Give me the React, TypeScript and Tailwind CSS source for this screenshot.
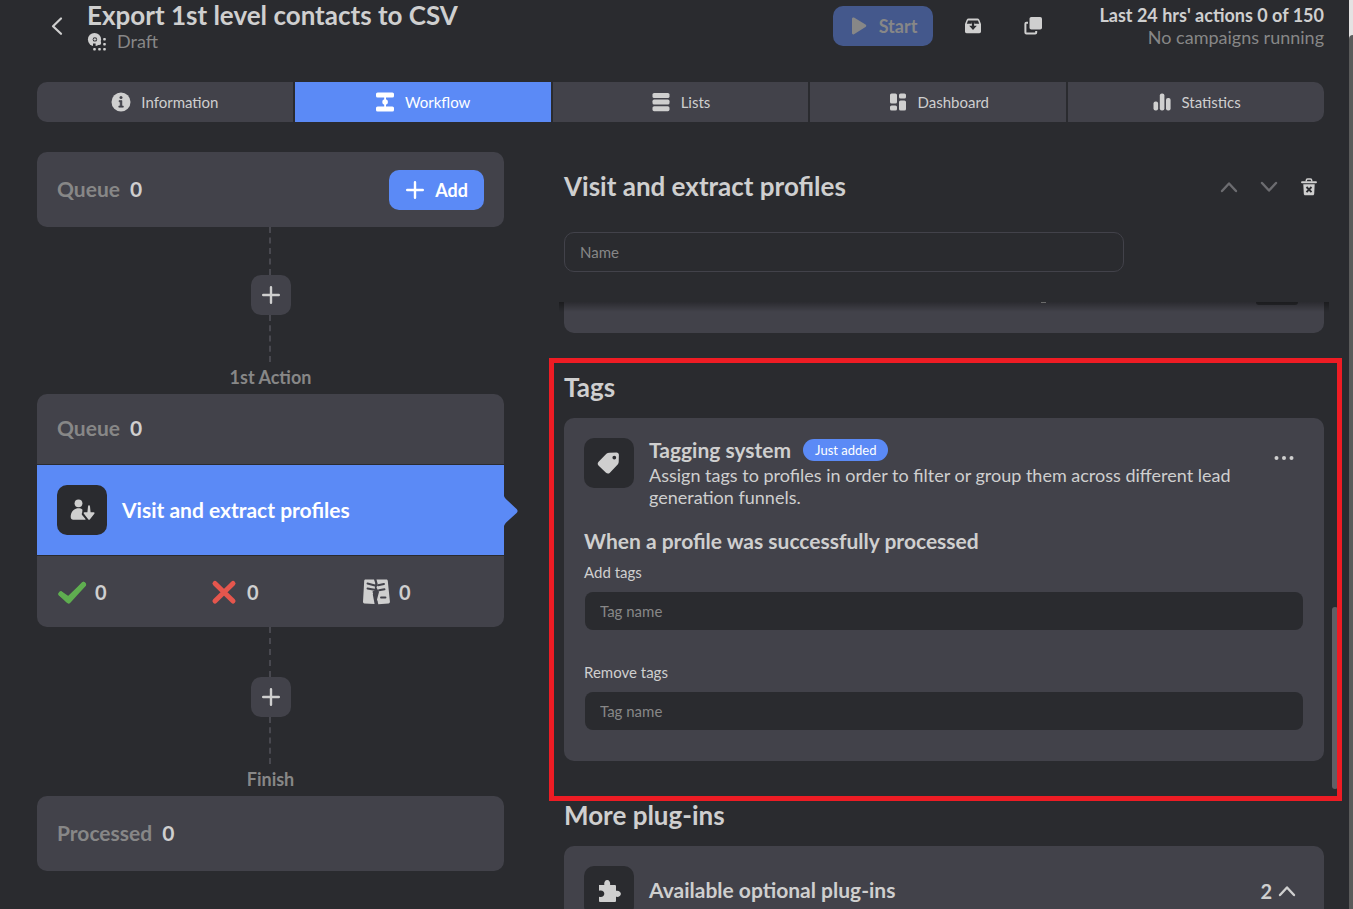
import React from 'react';

interface TabItem {
  label: string;
  icon: React.ReactNode;
  active?: boolean;
}

const tabs: TabItem[] = [
  {
    label: 'Information',
    icon: (
      <svg viewBox="0 0 20 20" className="w-5 h-5" fill="none">
        <circle cx="10" cy="10" r="9.5" fill="currentColor" />
        <circle cx="10" cy="5.6" r="1.5" fill="#42424a" />
        <path d="M8 8.6h2.900v5.400h1.400v1.200H7.800V14h1.400V9.800H8z" fill="#42424a" stroke="#42424a" strokeWidth="0.600" />
      </svg>
    ),
  },
  {
    label: 'Workflow',
    active: true,
    icon: (
      <svg viewBox="0 0 20 20" className="w-5 h-5" fill="currentColor">
        <rect x="1" y="0.5" width="18" height="5" rx="1.6" />
        <rect x="1" y="14.5" width="18" height="5" rx="1.6" />
        <rect x="9.2" y="4" width="1.8" height="12" />
        <circle cx="10.1" cy="10" r="2.8" />
      </svg>
    ),
  },
  {
    label: 'Lists',
    icon: (
      <svg viewBox="0 0 20 20" className="w-5 h-5" fill="currentColor">
        <rect x="1.5" y="1" width="17" height="5" rx="1.6" />
        <rect x="1.5" y="7.6" width="17" height="5" rx="1.6" />
        <rect x="1.5" y="14.2" width="17" height="5" rx="1.6" />
      </svg>
    ),
  },
  {
    label: 'Dashboard',
    icon: (
      <svg viewBox="0 0 20 20" className="w-5 h-5" fill="currentColor">
        <rect x="2" y="1.5" width="7" height="10" rx="1.6" />
        <rect x="2" y="13.5" width="7" height="5" rx="1.6" />
        <rect x="11" y="1.5" width="7" height="5" rx="1.6" />
        <rect x="11" y="8.5" width="7" height="10" rx="1.6" />
      </svg>
    ),
  },
  {
    label: 'Statistics',
    icon: (
      <svg viewBox="0 0 20 20" className="w-5 h-5" fill="currentColor">
        <rect x="1.5" y="9.5" width="4.6" height="9" rx="2" />
        <rect x="7.8" y="1.5" width="4.6" height="17" rx="2" />
        <rect x="14" y="6" width="4.6" height="12.5" rx="2" />
      </svg>
    ),
  },
];

const PlusIcon = () => (
  <svg viewBox="0 0 20 20" className="w-5 h-5" fill="none" stroke="currentColor" strokeWidth="2.4" strokeLinecap="round">
    <path d="M10 2.2v15.6M2.2 10h15.6" />
  </svg>
);

const ChevronIcon = ({ down = false }: { down?: boolean }) => (
  <svg viewBox="0 0 20 20" className="w-5 h-5" fill="none" stroke="currentColor" strokeWidth="2.4" strokeLinecap="round" strokeLinejoin="round">
    <path d={down ? 'M3 6l7 7.5L17 6' : 'M3 14l7-7.5L17 14'} />
  </svg>
);

const IconTile = ({ children }: { children: React.ReactNode }) => (
  <div className="flex-shrink-0 w-[50px] h-[50px] rounded-[10px] bg-[#2a2b2f] text-[#cfcfcf] flex items-center justify-center">
    {children}
  </div>
);

const AddStep = ({ next, tall = false }: { next: string; tall?: boolean }) => (
  <div className="flex flex-col items-center">
    <div className={`mr-px w-0 border-l-2 border-dashed border-[#48484f] ${tall ? 'h-[50px]' : 'h-12'}`} />
    <button
      type="button"
      aria-label="Add action"
      className="w-10 h-10 rounded-[10px] bg-[#42424a] text-[#cfcfcf] flex items-center justify-center"
    >
      <PlusIcon />
    </button>
    <div className="mr-px w-0 h-[47px] border-l-2 border-dashed border-[#48484f]" />
    <div className="h-8 text-lg leading-[30px] font-bold text-[#878787]">{next}</div>
  </div>
);

const Counter = ({ label, value }: { label: string; value: number }) => (
  <div className="flex gap-[10px] pb-[2px] text-[21px] leading-[30px] font-bold">
    <span className="text-[#878787]">{label}</span>
    <span className="text-[#cfcfcf]">{value}</span>
  </div>
);

const Header = () => (
  <header className="h-[82px]">
    <div className="h-[52px] flex items-center">
      <button type="button" aria-label="Back" className="w-10 h-10 flex items-center justify-center">
        <svg viewBox="0 0 20 20" className="w-5 h-5" fill="none" stroke="currentColor" strokeWidth="2.2" strokeLinecap="round" strokeLinejoin="round">
          <path d="M14 2.5L6 10.2l8 7.6" />
        </svg>
      </button>
      <div className="flex-1 ml-[10px]">
        <h1 className="text-[26px] leading-[31px] font-bold">Export 1st level contacts to CSV</h1>
        <div className="flex items-center gap-[10px] text-lg leading-[21px] text-[#878787]">
          <svg viewBox="0 0 20 20" className="w-5 h-5" fill="#cfcfcf">
            <circle cx="7.500" cy="7.500" r="6.600" />
            <circle cx="7.900" cy="7.400" r="2.200" fill="#2a2b2f" />
            <path d="M7.900 5.900v3M6.400 7.400h3" stroke="#cfcfcf" strokeWidth="1" />
            <path d="M6 11.500h2.600v3H6z" fill="#2a2b2f" />
            <circle cx="12.200" cy="11" r="2" />
            <rect x="16.200" y="6" width="2.600" height="2.600" rx="0.800" />
            <rect x="16.200" y="11" width="2.600" height="2.600" rx="0.800" />
            <rect x="16.200" y="16" width="2.600" height="2.600" rx="0.800" />
            <rect x="11.200" y="16" width="2.600" height="2.600" rx="0.800" />
            <rect x="6.200" y="16" width="2.600" height="2.600" rx="0.800" />
          </svg>
          <span>Draft</span>
        </div>
      </div>
      <button
        type="button"
        className="w-[100px] h-10 rounded-[10px] bg-[#44588c] text-[#878787] text-lg font-bold flex items-center justify-center gap-[10px]"
      >
        <svg viewBox="0 0 20 20" className="w-5 h-5" fill="currentColor">
          <path d="M3 2.800c0-1.100 1-1.700 2-1.200l11.500 6.900c1 .6 1 2 0 2.600L5 18.200c-1 .5-2-.1-2-1.200z" />
        </svg>
        Start
      </button>
      <button type="button" aria-label="Archive" className="ml-5 w-10 h-10 flex items-center justify-center">
        <svg viewBox="0 0 20 20" className="w-5 h-5" fill="currentColor">
          <path
            fillRule="evenodd"
            d="M5.600 2.500h8.800c.8 0 1.500.4 1.900 1.200L18 8v7.500c0 1-.7 1.700-1.700 1.700H3.700c-1 0-1.700-.7-1.700-1.700V8l1.700-4.300c.4-.8 1.100-1.200 1.900-1.200zM5 4.500L3.800 7.800h4.900V6.500h2.600v1.300h4.900L15 4.500z"
          />
          <path d="M8.900 5.500h2.200v4.300h2.700L10 14 6.200 9.800h2.700z" fill="#2a2b2f" />
        </svg>
      </button>
      <button type="button" aria-label="Duplicate" className="ml-5 w-10 h-10 flex items-center justify-center">
        <svg viewBox="0 0 20 20" className="w-5 h-5" fill="none">
          <rect x="6.500" y="1" width="12.500" height="12.500" rx="1.800" fill="currentColor" />
          <path d="M5 6.800H3.400c-.6 0-1 .4-1 1v8.800c0 .6.4 1 1 1h8.800c.6 0 1-.4 1-1V15" stroke="currentColor" strokeWidth="2" />
        </svg>
      </button>
      <div className="ml-10 min-w-[231px] text-right text-lg leading-[22px]">
        <div className="font-bold">Last 24 hrs' actions 0 of 150</div>
        <div className="text-[#878787]">No campaigns running</div>
      </div>
    </div>
  </header>
);

const TabBar = () => (
  <nav className="flex gap-[2px] rounded-[10px] overflow-hidden">
    {tabs.map((tab) => (
      <button
        key={tab.label}
        type="button"
        className={`flex-1 basis-0 h-10 flex items-center justify-center gap-[10px] text-[15px] ${
          tab.active ? 'bg-[#5b8af6] text-white' : 'bg-[#42424a] text-[#cfcfcf]'
        }`}
      >
        {tab.icon}
        {tab.label}
      </button>
    ))}
  </nav>
);

const results = [
  {
    name: 'Successful',
    icon: (
      <svg viewBox="0 0 30 30" className="w-[30px] h-[30px]" fill="none" stroke="#5fae50" strokeWidth="5" strokeLinecap="round" strokeLinejoin="round">
        <path d="M4 17l7.500 7L26.500 7.500" />
        <path d="M4 17l7.500 5L26.500 7.500" />
      </svg>
    ),
  },
  {
    name: 'Failed',
    icon: (
      <svg viewBox="0 0 30 30" className="w-[30px] h-[30px]" fill="none" stroke="#e5564d" strokeWidth="5" strokeLinecap="round">
        <path d="M6 6.500l18 17.500M24 6.500L6 24" />
      </svg>
    ),
  },
  {
    name: 'Excluded',
    icon: (
      <svg viewBox="0 0 30 30" className="w-[30px] h-[30px]" fill="none">
        <path d="M4.500 2.500h8.500l1.200 3.500-.4 6-2 5.500 1.800 9.500-10.200-.6c-1-.1-1.500-.8-1.400-1.600L3.200 4c.1-1 .4-1.500 1.300-1.500z" fill="#cfcfcf" />
        <path d="M15.500 2.500h9.700c1.200 0 1.500.7 1.600 1.500l2.100 20.500c.1 1-.4 1.700-1.400 1.900l-10.200.9-1.300-4.800 2-7.500-2.500-4.500 1.200-3.500z" fill="#cfcfcf" />
        <path d="M6.500 6.500l7.500 2M6.500 11.500l7 1.200M12.500 15l1.500 4 1.500 6M13.500 18l3-3.500M17 8.300l6-1.300M18 13.300l5.500-1M20 20.500h4.500" stroke="#42424a" strokeWidth="1.900" strokeLinecap="round" />
      </svg>
    ),
  },
];

const Workflow = () => (
  <section className="flex flex-col">
    <div className="h-[75px] px-5 rounded-[10px] bg-[#42424a] flex items-center justify-between">
      <Counter label="Queue" value={0} />
      <button
        type="button"
        className="w-[95px] h-10 rounded-[10px] bg-[#5b8af6] text-white text-lg font-bold flex items-center justify-center gap-[10px]"
      >
        <PlusIcon />
        Add
      </button>
    </div>
    <AddStep next="1st Action" />
    <div className="flex flex-col gap-px">
      <div className="h-[70px] px-5 rounded-t-[10px] bg-[#42424a] flex items-center">
        <Counter label="Queue" value={0} />
      </div>
      <div className="relative h-[90px] px-5 bg-[#5b8af6] flex items-center gap-[15px] text-white text-[21px] font-bold">
        <IconTile>
          <svg viewBox="0 0 26 26" className="w-[26px] h-[26px]" fill="currentColor">
            <circle cx="9.500" cy="6.300" r="3.900" />
            <path d="M9.500 11.300c1.600 0 3 .5 4 1.400l-.4 3.200c-.5.5-.5 1.400 0 2l3.400 4c.2.300 0 .800-.5.800H4.200c-1.500 0-2.500-1.100-2.500-2.700 0-4.800 3.200-8.700 7.800-8.700z" />
            <path d="M19 9.500c.5-2 1.500-2 2 0l.6 5.700h3c1 0 1.300.8.700 1.500l-4.300 5.500c-.6.700-1.300.7-1.800 0l-4.300-5.500c-.6-.7-.3-1.500.6-1.500h2.900z" />
          </svg>
        </IconTile>
        Visit and extract profiles
        <svg viewBox="0 0 14 30" className="absolute left-full top-[31px] w-[14px] h-[30px]" fill="#5b8af6">
          <path d="M0 0c.8 2 2.200 3.600 4.600 5.400l8 7.600c1.300 1.200 1.300 2.800 0 4l-8 7.200C2.200 26.200.8 27.800 0 30z" />
        </svg>
      </div>
      <div className="h-[71px] px-5 rounded-b-[10px] bg-[#42424a] grid grid-cols-[152fr_152fr_123fr] items-center">
        {results.map((result) => (
          <div key={result.name} aria-label={result.name} className="flex items-center gap-2 text-xl font-bold">
            {result.icon}
            <span>0</span>
          </div>
        ))}
      </div>
    </div>
    <AddStep next="Finish" tall />
    <div className="h-[75px] px-5 rounded-[10px] bg-[#42424a] flex items-center">
      <Counter label="Processed" value={0} />
    </div>
  </section>
);

const TagField = ({ id, label }: { id: string; label: string }) => (
  <div className="flex flex-col">
    <label htmlFor={id} className="text-[15px] leading-7">
      {label}
    </label>
    <input
      id={id}
      type="text"
      placeholder="Tag name"
      className="mt-[6px] h-[38px] mx-px px-[15px] rounded-lg bg-[#2a2b2f] text-[15px] placeholder:text-[#878787]"
    />
  </div>
);

const TagsSection = () => (
  <div className="relative mt-[25px] pb-10">
    <h2 className="pb-[2px] text-[26px] leading-[58px] font-bold">Tags</h2>
    <div className="rounded-[10px] bg-[#42424a] p-5 pb-[31px]">
      <div className="flex items-start">
        <IconTile>
          <svg viewBox="1 0 24 24" className="w-6 h-6">
            <path
              fill="currentColor"
              fillRule="evenodd"
              d="M13.400 1.700l7-.3c1.600 0 2.500 1 2.500 2.500l-.2 7c0 1-.4 1.800-1 2.500l-7.800 8.300c-1.200 1.200-2.700 1.200-3.900.1l-7.300-7c-1.300-1.200-1.300-2.800-.1-4l7.800-8c.8-.7 1.800-1.100 3-1.100zm4.900 3a1.900 1.900 0 1 0 0 3.800 1.900 1.900 0 0 0 0-3.800z"
            />
          </svg>
        </IconTile>
        <div className="ml-[15px] flex-1">
          <div className="mb-[2px] flex items-center gap-3">
            <h3 className="text-[21px] leading-6 font-bold">Tagging system</h3>
            <span className="px-3 rounded-full bg-[#5b8af6] text-white text-[13px] leading-[22px]">Just added</span>
          </div>
          <p className="text-lg leading-[22px] max-w-[600px]">
            Assign tags to profiles in order to filter or group them across different lead generation funnels.
          </p>
        </div>
        <button type="button" aria-label="More options" className="w-10 h-10 flex items-center justify-center">
          <svg viewBox="0 0 20 20" className="w-5 h-5" fill="currentColor">
            <circle cx="2.500" cy="10" r="2" />
            <circle cx="10" cy="10" r="2" />
            <circle cx="17.500" cy="10" r="2" />
          </svg>
        </button>
      </div>
      <h4 className="mt-[18px] text-[21px] leading-[30px] font-bold">When a profile was successfully processed</h4>
      <div className="mt-[2px] flex flex-col gap-7">
        <TagField id="add-tags" label="Add tags" />
        <TagField id="remove-tags" label="Remove tags" />
      </div>
    </div>
    <div className="absolute right-[-14px] bottom-3 w-[6px] h-[182px] rounded-full bg-[#606066]" />
    <div className="absolute top-0 bottom-0 left-[-15px] right-[-18px] border-[5px] border-[#ee1c24] pointer-events-none" />
  </div>
);

const ActionPanel = () => (
  <section className="flex flex-col">
    <div className="flex items-center pt-[15px]">
      <h2 className="flex-1 pb-[2px] text-[26px] leading-[38px] font-bold">Visit and extract profiles</h2>
      <button type="button" aria-label="Move up" className="w-10 h-10 flex items-center justify-center text-[#6c6c70]">
        <ChevronIcon />
      </button>
      <button type="button" aria-label="Move down" className="w-10 h-10 flex items-center justify-center text-[#6c6c70]">
        <ChevronIcon down />
      </button>
      <button type="button" aria-label="Delete" className="-mr-[5px] w-10 h-10 flex items-center justify-center">
        <svg viewBox="0 0 20 20" className="w-5 h-5" fill="none" stroke="currentColor">
          <path d="M3 5.200h14" strokeWidth="1.900" strokeLinecap="round" />
          <path d="M7.300 4.500V3.400c0-.8.500-1.300 1.300-1.300h2.800c.8 0 1.300.5 1.300 1.300v1.100" strokeWidth="1.500" />
          <path d="M4.300 7.300h11.400l-.5 9.500c0 .9-.6 1.500-1.400 1.500H6.200c-.8 0-1.400-.6-1.400-1.500z" fill="currentColor" stroke="none" />
          <path d="M7.500 10l5 5.200M12.500 10l-5 5.200" stroke="#2a2b2f" strokeWidth="1.900" />
        </svg>
      </button>
    </div>
    <input
      type="text"
      aria-label="Name"
      placeholder="Name"
      className="mt-[25px] h-10 w-full max-w-[560px] px-[15px] rounded-[10px] border border-[#42424a] bg-transparent text-[15px] placeholder:text-[#878787]"
    />
    <div className="relative mt-[30px]">
      {/* lower edge of the plug-in card scrolled under the panel header */}
      <div className="h-[31px] px-[26px] rounded-b-[10px] bg-[#42424a] flex justify-end">
        <div className="w-[5px] h-px bg-[#a0a0a0] mr-[210px]" />
        <div className="w-[42px] h-[3px] rounded-b-full bg-[#2a2b2f]" />
      </div>
      <div className="absolute top-0 left-[-5px] right-[-5px] h-[10px] bg-gradient-to-b from-black/35 to-transparent" />
    </div>
    <TagsSection />
    <h2 className="pb-[2px] text-[26px] leading-7 font-bold">More plug-ins</h2>
    <div className="mt-[15px] rounded-[10px] bg-[#42424a] p-5 flex items-center gap-[15px] text-[21px] font-bold">
      <IconTile>
        <svg viewBox="0 0 24 24" className="w-6 h-6" fill="currentColor">
          <path d="M2 6h5.300c-.5-3 .9-5 2.900-5s3.400 2 2.900 5h4.600c.8 0 1.300.5 1.300 1.300v4.500c2.600-.6 4.900.9 4.900 3s-2.300 3.600-4.900 3v4c0 .8-.5 1.300-1.300 1.300H3.300c-.8 0-1.300-.5-1.300-1.300v-4c3.300.9 5.300-.7 5.300-3s-2-3.900-5.300-3z" />
        </svg>
      </IconTile>
      <span className="flex-1 pb-[2px]">Available optional plug-ins</span>
      <button type="button" className="mr-[7px] flex items-center gap-[5px] text-xl">
        2
        <ChevronIcon />
      </button>
    </div>
  </section>
);

const App: React.FC = () => (
  <div className="h-screen flex overflow-hidden bg-[#2a2b2f] text-[#cfcfcf] font-['Lato',sans-serif]">
    <main className="flex-1 min-w-0 pl-[37px] pr-[25px]">
      <Header />
      <TabBar />
      <div className="mt-[30px] grid grid-cols-[467fr_760fr] gap-[60px]">
        <Workflow />
        <ActionPanel />
      </div>
    </main>
    <div className="w-1 bg-[#e4e2e2] pt-[35px]">
      <div className="h-full rounded-tl bg-[#5a5a5a]" />
    </div>
  </div>
);

export default App;
